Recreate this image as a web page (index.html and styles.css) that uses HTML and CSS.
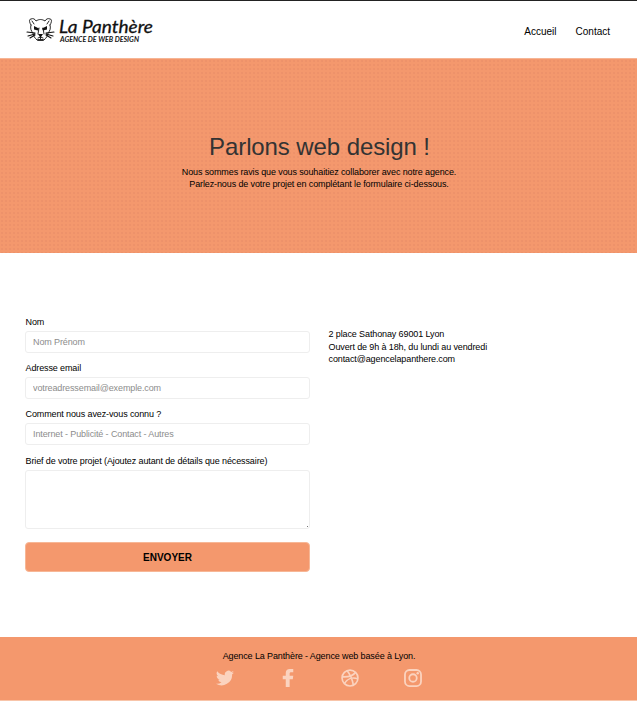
FILE: index.html
```html
<!DOCTYPE html>
<html lang="fr">
<head>
<meta charset="utf-8">
<title>La Panthère - Contact</title>
<link rel="stylesheet" href="styles.css">
</head>
<body>
<header class="header">
  <a class="logo" href="#">
    <svg width="130" height="32" viewBox="0 -2 130 32">
      <g fill="none" stroke="#111" stroke-width=".9" stroke-linecap="round" stroke-linejoin="round">
        <path d="M4 9C2 6 2 3 4 3c2-1 4 0 5 2 3-2 6-2 9 0 1-2 3-3 5-2 2 0 2 3 0 6M5 5l2 3M22 5l-2 3M4 9c-1 3 0 6 2 8 0 3 2 5 4 7h7c2-2 4-4 4-7 2-2 3-5 2-8M12 12l-1 6M16 12l1 6M13.500 21v2M11 22l2.500-1 2.500 1"/>
        <path d="M0 16l8 1M1 20l7-2M3 22l5-3M27 16l-8 1M26 20l-7-2M24 22l-5-3" stroke-width="1.100"/>
        <path d="M11 24h5" stroke-width="1.500"/>
      </g>
      <path d="M7 10l5 2.500-1 2-4-1zM20 10l-5 2.500 1 2 4-1zM11 18h5l-2 3h-1z" fill="#111"/>
      <text class="logo-name" x="32" y="17" textLength="94" lengthAdjust="spacingAndGlyphs">La Panthère</text>
      <text class="logo-tag" x="33" y="25.500" textLength="79" lengthAdjust="spacingAndGlyphs">AGENCE DE WEB DESIGN</text>
    </svg>
  </a>
  <nav class="nav"><a href="#">Accueil</a><a href="#">Contact</a></nav>
</header>
<section class="hero">
  <h1>Parlons web design !</h1>
  <p>Nous sommes ravis que vous souhaitiez collaborer avec notre agence.<br>Parlez-nous de votre projet en complétant le formulaire ci-dessous.</p>
</section>
<main class="main">
  <form class="form">
    <label for="nom">Nom</label>
    <input id="nom" class="field" placeholder="Nom Prénom">
    <label for="email">Adresse email</label>
    <input id="email" class="field" placeholder="votreadressemail@exemple.com">
    <label for="source">Comment nous avez-vous connu ?</label>
    <input id="source" class="field" placeholder="Internet - Publicité - Contact - Autres">
    <label class="brief-label" for="brief">Brief de votre projet (Ajoutez autant de détails que nécessaire)</label>
    <textarea id="brief" class="field area"></textarea>
    <button class="send" type="button">ENVOYER</button>
  </form>
  <address class="address">2 place Sathonay 69001 Lyon<br>Ouvert de 9h à 18h, du lundi au vendredi<br>contact@agencelapanthere.com</address>
</main>
<footer class="footer">
  <p>Agence La Panthère - Agence web basée à Lyon.</p>
  <div class="social">
    <svg viewBox="0 0 24 24"><path fill="currentColor" d="M24 4.600a10 10 0 0 1-2.800.8 5 5 0 0 0 2.100-2.700 10 10 0 0 1-3.100 1.200 4.900 4.900 0 0 0-8.400 4.500A14 14 0 0 1 1.700 3.100a4.900 4.900 0 0 0 1.500 6.600 4.900 4.900 0 0 1-2.200-.6 4.900 4.900 0 0 0 3.900 4.900 5 5 0 0 1-2.200.1 4.900 4.900 0 0 0 4.600 3.400A9.900 9.900 0 0 1 0 19.500a14 14 0 0 0 21.500-12.400A10 10 0 0 0 24 4.600z"/></svg>
    <svg viewBox="0 0 24 24"><path fill="currentColor" d="M9 24V13.500H5V9h4V5.300C9 1.900 11 0 14.300 0H19v4.200h-2.800c-1.600 0-2 .8-2 1.900V9H19l-.6 4.500h-4.200V24z"/></svg>
    <svg viewBox="0 0 24 24"><g fill="none" stroke="currentColor" stroke-width="2.200"><circle cx="12" cy="12" r="10.600"/><path d="M8 2c4 5 7 11 8.500 19.500M1.500 10.500C9 11 16 9 19.500 4.500M4.500 19.500C8 13 15 10.500 22.500 13"/></g></svg>
    <svg viewBox="0 0 24 24"><g fill="none" stroke="currentColor" stroke-width="2.400"><rect x="1.300" y="1.300" width="21.400" height="21.400" rx="6"/><circle cx="12" cy="12" r="5"/></g><circle cx="18.300" cy="5.700" r="1.600" fill="currentColor"/></svg>
  </div>
</footer>
</body>
</html>
```
FILE: styles.css
```css
* { box-sizing: border-box; }
body { margin: 0; background: #fff; color: #000; font: 9px/12.500px "Liberation Sans", Arial, sans-serif; letter-spacing: -.115px; }
p, h1 { margin: 0; font-weight: 400; }
a { color: inherit; text-decoration: none; }
.header { height: 58px; border-top: 1px solid #222; display: flex; justify-content: space-between; padding: 13px 27px 0; }
.logo svg { display: block; overflow: visible; }
.logo text { letter-spacing: 0; fill: #111; }
.logo-name { font: italic 400 18px Lato, sans-serif; stroke: #111; stroke-width: .3px; }
.logo-tag { font: italic 700 6.500px Lato, sans-serif; }
.nav { display: flex; gap: 19px; padding-top: 12px; font-size: 10px; letter-spacing: 0; }
.hero { height: 195px; padding-top: 74px; text-align: center; border-top: 1px solid #f6b595; background: radial-gradient(circle at 2px 2px, #ec9169 .6px, transparent 1.200px) 0 0 / 4px 4px #f4986d; }
.hero h1 { padding-left: 2px; font-size: 24px; line-height: 28px; letter-spacing: -.1px; color: #333; }
.hero p { margin-top: 5px; padding-left: 1px; line-height: 12px; }
.main { height: 384px; padding: 63px 25px 0; display: grid; grid-template-columns: 285px 1fr; column-gap: 18.500px; }
.form { display: flex; flex-direction: column; align-items: stretch; }
.form label { height: 15px; line-height: 12px; padding-left: .5px; }
.form .brief-label { margin-top: 1px; }
.field { height: 22px; margin: 0 0 9px; padding: 0 7px; border: 1px solid #eee; border-radius: 3px; background: #fff; font: inherit; letter-spacing: inherit; }
.field::placeholder { color: #8c8c8c; opacity: 1; }
.area { height: 59px; margin-bottom: 13px; resize: none; background: linear-gradient(#777, #777) right 1px bottom 1px / 1px 1px no-repeat #fff; }
.send { height: 30px; border: 1px solid #f7b796; border-radius: 4px; background: #f4986d; font: 700 10px "Liberation Sans", Arial, sans-serif; color: #000; padding: 0; letter-spacing: 0; }
.address { font-style: normal; padding-top: 12px; }
.footer { height: 64px; padding-top: 13px; background: #f4986d; border-bottom: 1px solid #f8c5aa; text-align: center; }
.footer p { line-height: 12px; padding-left: 1px; }
.social { display: flex; justify-content: center; gap: 44.600px; margin-top: 7px; padding-left: 1px; color: #fbd3bf; }
.social svg { width: 18px; height: 18px; }
```
